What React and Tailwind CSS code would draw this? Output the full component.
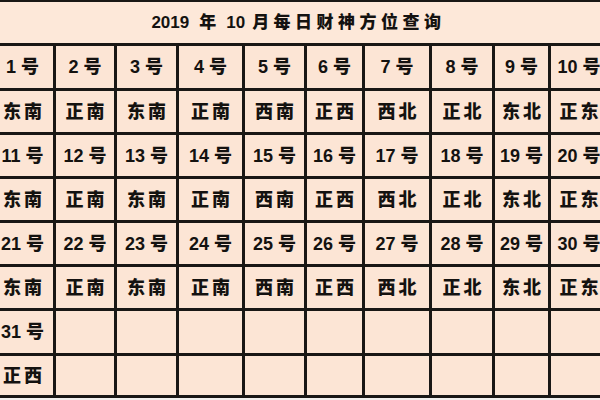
import React from "react";

const days = [
  ["1", "2", "3", "4", "5", "6", "7", "8", "9", "10"],
  ["11", "12", "13", "14", "15", "16", "17", "18", "19", "20"],
  ["21", "22", "23", "24", "25", "26", "27", "28", "29", "30"],
];
const dirs = ["东南", "正南", "东南", "正南", "西南", "正西", "西北", "正北", "东北", "正东"];
const rowH = ["h-[42px]", "h-[41px]", "h-[41px]", "h-[41px]", "h-[41px]", "h-[41px]", "h-[42px]", "h-[39px]"];

const Cell = ({ children, h }) => (
  <div className={`bg-[#fce5d5] flex items-center justify-center ${h}`}>{children}</div>
);

const App = () => {
  const rows = [];
  days.forEach((week) => {
    rows.push(week.map((d) => <span>{d}<span className="ml-[5px]">号</span></span>));
    rows.push(dirs.map((t) => <span className="tracking-[3px] pl-[3px]">{t}</span>));
  });
  rows.push([<span>31<span className="ml-[5px]">号</span></span>, ...Array(9).fill(null)]);
  rows.push([<span className="tracking-[3px] pl-[3px]">正西</span>, ...Array(9).fill(null)]);

  return (
    <div className="w-[600px] h-[400px] overflow-hidden bg-[#f1efed] text-[#141210] font-black font-['Liberation_Sans','Noto_Sans_CJK_SC',sans-serif]">
      <div className="-ml-[8px] w-max grid grid-cols-[61px_58px_59px_63px_59px_55px_64px_60px_53px_56px] gap-[3px] bg-[#191715] border-t-[2px] border-b-[3px] border-[#191715]">
        <div className="col-span-10 h-[41px] bg-[#fde8d9] flex items-center justify-center text-[17px]">
          <div className="ml-[-2px] flex items-center">
            <span>2019</span>
            <span className="ml-[10px] tracking-[4px]">年</span>
            <span className="ml-[6px]">10</span>
            <span className="ml-[7px] tracking-[4.5px]">月每日财神方位查询</span>
          </div>
        </div>
        {rows.map((row, r) =>
          row.map((c, j) => (
            <Cell key={`${r}-${j}`} h={rowH[r]}>
              <span className="text-[18px] leading-none">{c}</span>
            </Cell>
          ))
        )}
      </div>
    </div>
  );
};

export default App;
